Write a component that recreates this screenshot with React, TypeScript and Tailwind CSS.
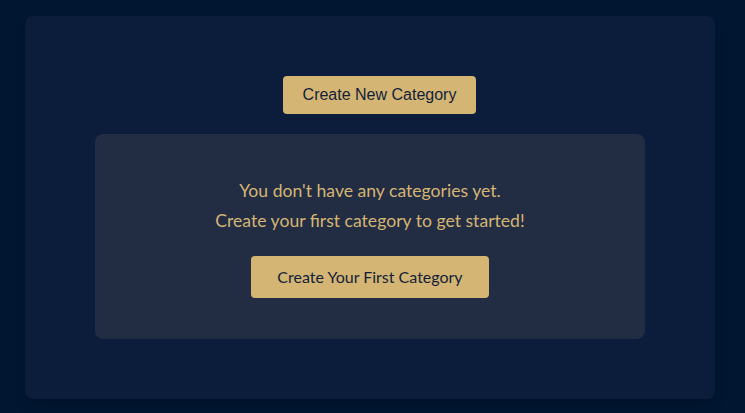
export default function App() {
  return (
    <div className="min-h-[413px] bg-[#011631] pl-[25px] pr-[30px] pt-4 pb-[15px]">
      <div className="flex flex-col items-center rounded-lg bg-[#0c1c3b] px-[70px] py-[60px] shadow-lg">
        <button
          className="ml-[19px] h-[38px] rounded bg-[#d4b574] px-5 text-base text-[#131f3a] font-['Liberation_Sans',Arial,sans-serif]"
          type="button"
        >
          Create New Category
        </button>
        <div className="mt-5 flex w-full flex-col items-center rounded-lg bg-[#222c42] px-10 pt-[42px] pb-[41px] font-['Lato',sans-serif] text-[#d4b574]">
          <p className="text-[17.6px] leading-[30px]">You don't have any categories yet.</p>
          <p className="text-[17.6px] leading-[30px]">Create your first category to get started!</p>
          <button
            className="mt-5 h-[42px] rounded bg-[#d4b574] px-[26px] text-base text-[#131f3a]"
            type="button"
          >
            Create Your First Category
          </button>
        </div>
      </div>
    </div>
  );
}
